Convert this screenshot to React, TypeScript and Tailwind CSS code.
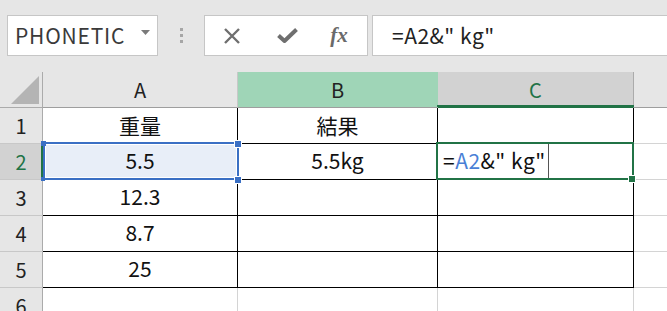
import React from "react";

const FONT = "font-['Noto_Sans_CJK_JP','Noto_Sans',sans-serif]";

function RowHeader({ n, active }: { n: number; active?: boolean }) {
  return (
    <div
      className={
        "relative w-[43px] shrink-0 flex items-center justify-center text-[20px] border-r border-b " +
        (active
          ? "bg-[#d2d2d2] text-[#217346] border-r-[#ababab] border-b-[#c8c8c8]"
          : "bg-[#e6e6e6] text-[#222] border-r-[#ababab] border-b-[#c8c8c8]")
      }
    >
      {n}
      {active && <div className="absolute right-[-1px] top-0 bottom-[-1px] w-[2px] bg-[#217346]" />}
    </div>
  );
}

function Cell({
  w,
  children,
  black = true,
  className = "bg-white",
}: {
  w: string;
  children?: React.ReactNode;
  black?: boolean;
  className?: string;
}) {
  return (
    <div
      className={
        `${w} shrink-0 relative flex items-center justify-center text-[21px] text-[#111] border-r border-b ` +
        (black ? "border-black " : "border-[#d4d4d4] ") +
        className
      }
    >
      {children}
    </div>
  );
}

function Rest({ last }: { last?: boolean }) {
  return <div className={"flex-1 bg-white " + (last ? "" : "border-b border-[#d4d4d4]")} />;
}

export default function App() {
  return (
    <div className={`w-[667px] h-[311px] overflow-hidden bg-[#e6e6e6] ${FONT}`}>
      {/* toolbar */}
      <div className="h-[72px] flex items-start pt-[15px] pl-[7px]">
        <div className="w-[151px] h-[41px] shrink-0 bg-white border border-[#c6c6c6] flex items-center pl-[7px] pr-[7px] justify-between">
          <span className="text-[21px] text-[#3a3a3a] tracking-[0.8px] leading-none">PHONETIC</span>
          <svg width="9" height="5" viewBox="0 0 9 5" className="mt-[-6px]">
            <path d="M0 0H9L4.5 5Z" fill="#7a7a7a" />
          </svg>
        </div>
        <div className="w-[46px] h-[41px] shrink-0 flex flex-col items-center justify-center gap-[3px]">
          <div className="w-[3px] h-[3px] bg-[#a6a6a6]" />
          <div className="w-[3px] h-[3px] bg-[#a6a6a6]" />
          <div className="w-[3px] h-[3px] bg-[#a6a6a6]" />
        </div>
        <div className="w-[164px] h-[41px] shrink-0 bg-white border border-[#c6c6c6] flex items-center pl-[15px]">
          <div className="w-[24px] flex justify-center">
            <svg width="18" height="16" viewBox="0 0 18 16">
              <path d="M2 1L16 15M16 1L2 15" stroke="#6f6f6f" strokeWidth="2.4" />
            </svg>
          </div>
          <div className="w-[24px] ml-[31px] flex justify-center">
            <svg width="21" height="15" viewBox="0 0 21 15">
              <path d="M1.5 7.5L7.5 13L19.5 1.5" stroke="#6f6f6f" strokeWidth="4" fill="none" strokeLinejoin="round" />
            </svg>
          </div>
          <div className="w-[24px] ml-[28px] flex justify-center">
            <span className="font-['Liberation_Serif',serif] italic font-bold text-[21px] text-[#6a6a6a] leading-none">
              fx
            </span>
          </div>
        </div>
        <div className="ml-[4px] flex-1 h-[41px] bg-white border border-r-0 border-[#c6c6c6] flex items-center pl-[19px]">
          <span className="text-[21px] text-[#222] tracking-[0.5px]">=A2&amp;" kg"</span>
        </div>
      </div>

      {/* column header row */}
      <div className="flex h-[36px]">
        <div className="w-[43px] shrink-0 relative bg-[#e6e6e6] border-r border-b border-[#ababab]">
          <svg width="28" height="28" viewBox="0 0 28 28" className="absolute left-[11px] top-[4px]">
            <path d="M28 0V28H0Z" fill="#b4b4b4" />
          </svg>
        </div>
        <div className="w-[195px] shrink-0 flex items-center justify-center text-[20px] text-[#222] bg-[#e6e6e6] border-r border-b border-r-[#c8c8c8] border-b-[#9e9e9e]">
          A
        </div>
        <div className="w-[200px] shrink-0 flex items-center justify-center text-[20px] text-[#222] bg-[#9fd5b7] border-r border-b border-r-[#9fd5b7] border-b-[#9e9e9e]">
          B
        </div>
        <div className="w-[196px] shrink-0 relative flex items-center justify-center text-[20px] text-[#217346] bg-[#d2d2d2] border-r border-b border-r-[#ababab] border-b-[#217346]">
          C
          <div className="absolute left-[-1px] right-[-1px] bottom-0 h-[2px] bg-[#217346]" />
        </div>
        <div className="flex-1 bg-[#e6e6e6] border-b border-[#9e9e9e]" />
      </div>

      {/* row 1 */}
      <div className="flex h-[36px]">
        <RowHeader n={1} />
        <Cell w="w-[195px]">重量</Cell>
        <Cell w="w-[200px]">結果</Cell>
        <Cell w="w-[196px]" />
        <Rest />
      </div>

      {/* row 2 */}
      <div className="flex h-[36px]">
        <RowHeader n={2} active />
        <Cell w="w-[195px]" className="bg-[#e8eef8] z-10">
          <span className="mt-[-2px]">5.5</span>
          <div className="absolute left-0 top-[-2px] w-[196px] h-[38px] border-2 border-[#3a6fc4]" />
          <div className="absolute left-[2px] top-0 w-[192px] h-[34px] border border-white" />
          <div className="absolute left-[-2px] top-[-3px] w-[5px] h-[5px] bg-[#3a6fc4]" />
          <div className="absolute left-[191px] top-[-4px] w-[6px] h-[6px] bg-[#3a6fc4] border border-white box-content" />
          <div className="absolute left-[191px] top-[32px] w-[6px] h-[6px] bg-[#3a6fc4] border border-white box-content" />
          <div className="absolute left-[-2px] top-[33px] w-[4px] h-[4px] bg-[#3a6fc4]" />
        </Cell>
        <Cell w="w-[200px]">
          <span className="mt-[-2px]">5.5kg</span>
        </Cell>
        <Cell w="w-[196px]" className="bg-white !justify-start z-10">
          <span className="ml-[5px] mt-[-2px] text-[#111] tracking-[0.5px]">
            =<span className="text-[#4a7fd6]">A2</span>&amp;" kg"
          </span>
          <div className="ml-[2px] w-px self-stretch bg-[#555]" />
          <div className="absolute left-[-2px] top-[-2px] w-[198px] h-[38px] border-2 border-[#217346]" />
          <div className="absolute left-[190px] top-[31px] w-[6px] h-[6px] bg-[#217346] border border-white box-content" />
        </Cell>
        <Rest />
      </div>

      {/* rows 3-5 */}
      {[
        [3, "12.3"],
        [4, "8.7"],
        [5, "25"],
      ].map(([n, v]) => (
        <div key={n as number} className="flex h-[36px]">
          <RowHeader n={n as number} />
          <Cell w="w-[195px]">
            <span className="mt-[-2px]">{v}</span>
          </Cell>
          <Cell w="w-[200px]" />
          <Cell w="w-[196px]" />
          <Rest />
        </div>
      ))}

      {/* row 6 */}
      <div className="flex h-[36px]">
        <RowHeader n={6} />
        <Cell w="w-[195px]" black={false} />
        <Cell w="w-[200px]" black={false} />
        <Cell w="w-[196px]" black={false} />
        <Rest />
      </div>
    </div>
  );
}
